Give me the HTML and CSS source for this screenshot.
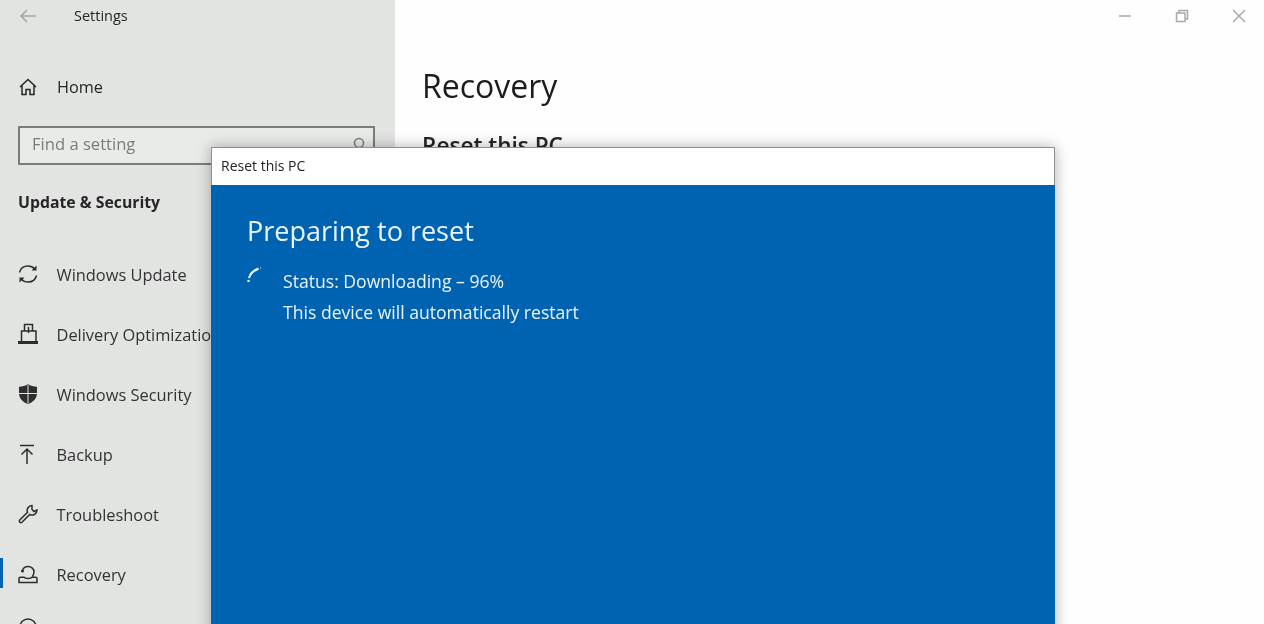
FILE: index.html
```html
<!DOCTYPE html>
<html lang="en">
<head>
    <meta charset="UTF-8">
    <title>Settings</title>
    <link rel="stylesheet" href="styles.css">
</head>
<body>
    <div class="window">
        <div class="sidebar">
            <div class="titlebar">
                <svg class="back" width="18" height="14" viewBox="0 0 18 14"><path d="M8 1 2 7l6 6M2 7h15"/></svg>
                <span>Settings</span>
            </div>
            <div class="home-row">
                <svg class="icon" width="20" height="20" viewBox="0 0 20 20"><path d="M2 10 10 2.500 18 10M4 8.500V17.500H8V12.500H12V17.500H16V8.500"/></svg>
                <span>Home</span>
            </div>
            <div class="search">
                <span>Find a setting</span>
                <svg width="14" height="14" viewBox="0 0 14 14"><circle cx="7" cy="6" r="4.500"/></svg>
            </div>
            <h3 class="section">Update &amp; Security</h3>
            <ul class="nav">
                <li>
                    <svg class="icon" width="22" height="22" viewBox="0 0 22 22"><path d="M2.500 9.500C3.500 5.500 7 3 11 3c2.800 0 5 1 6.800 3M19.500 12.500C18.500 16.500 15 19 11 19c-2.800 0-5-1-6.800-3"/><path class="solid" d="M19.500 2.500v5h-5zM2.500 19.500v-5h5z"/></svg>
                    <span>Windows Update</span>
                </li>
                <li>
                    <svg class="icon" width="22" height="22" viewBox="0 0 22 22"><path d="M4.500 18V8H19V18M7.500 8V1.500H15.500V8M11.500 10V4"/><path class="solid" d="M1 18H21V21H1Z"/></svg>
                    <span>Delivery Optimization</span>
                </li>
                <li>
                    <svg class="icon" width="22" height="22" viewBox="0 0 22 22"><path class="solid" d="M11 1c2.500 1.800 5.500 2.700 9 2.800V10c0 5.500-3.500 9-9 11C5.500 19 2 15.500 2 10V3.800C5.500 3.700 8.500 2.800 11 1Z"/><path class="gap" d="M11 1.500v19M2 10.500h18"/></svg>
                    <span>Windows Security</span>
                </li>
                <li>
                    <svg class="icon" width="22" height="22" viewBox="0 0 22 22"><path d="M3 2.500H17M10 21V6M4.500 11.500 10 6l5.500 5.500"/></svg>
                    <span>Backup</span>
                </li>
                <li>
                    <svg class="icon" width="22" height="22" viewBox="0 0 22 22"><path d="M15 2.500a5 5 0 0 0-4.500 6.800L2.800 17a1.700 1.700 0 0 0 0 2.200 1.700 1.700 0 0 0 2.200 0l7.700-7.700A5 5 0 0 0 20 7l-3 1.500-2-2Z"/></svg>
                    <span>Troubleshoot</span>
                </li>
                <li class="active">
                    <svg class="icon" width="22" height="22" viewBox="0 0 22 22"><path d="M5.500 7a6 6 0 0 1 5.500-3.500c3.500 0 6 2.500 6 5.500 0 1.500-.5 3-1.500 4.500M2 19.500V15.500c0-.8.500-1.300 1.300-1.300H7c1 1.800 7 1.800 8 0h3.700c.8 0 1.300.5 1.300 1.300v4Z"/><circle class="solid" cx="5.500" cy="8" r="1.500"/></svg>
                    <span>Recovery</span>
                </li>
                <li>
                    <svg class="icon peek" width="22" height="22" viewBox="0 0 22 22"><circle cx="11" cy="4" r="8"/></svg>
                </li>
            </ul>
        </div>
        <div class="main">
            <div class="window-buttons">
                <svg width="14" height="14" viewBox="0 0 14 14"><path d="M1 7H13"/></svg>
                <svg width="14" height="14" viewBox="0 0 14 14"><path d="M1.500 4H10V12.500H1.500ZM4 4V1.500H12.500V10H10"/></svg>
                <svg width="14" height="14" viewBox="0 0 14 14"><path d="M1 1 13 13M13 1 1 13"/></svg>
            </div>
            <h1>Recovery</h1>
            <h2>Reset this PC</h2>
        </div>
        <div class="dialog">
            <div class="dialog-title">Reset this PC</div>
            <div class="dialog-body">
                <h2>Preparing to reset</h2>
                <div class="status">
                    <svg class="spinner" width="18" height="20" viewBox="0 0 18 20"><path d="M1.500 15C1.500 8 6 2.500 14 1"/></svg>
                    <div>
                        <p>Status: Downloading – 96%</p>
                        <p>This device will automatically restart</p>
                    </div>
                </div>
            </div>
        </div>
    </div>
</body>
</html>
```

FILE: styles.css
```css
* {
    box-sizing: border-box;
}

html, body {
    height: 100%;
    margin: 0;
    overflow: hidden;
}

body {
    font-family: 'Open Sans', 'Noto Sans', sans-serif;
    color: #262626;
}

.window {
    display: flex;
    height: 624px;
    position: relative;
    overflow: hidden;
    background: #fdfefd;
    filter: blur(0.5px);
}

svg {
    fill: none;
    stroke: currentColor;
    stroke-width: 1.5;
    flex: none;
}

.solid {
    fill: currentColor;
    stroke: none;
}

.gap {
    stroke: #e2e4e2;
    stroke-width: 1;
}

/* sidebar */
.sidebar {
    width: 395px;
    flex: none;
    background: #e2e4e2;
    padding: 0 20px 0 18px;
}

.titlebar {
    display: flex;
    align-items: center;
    height: 31px;
    font-size: 14.5px;
}

.back {
    color: #a4a6a4;
    margin: 0 37px 0 1px;
}

.home-row {
    display: flex;
    align-items: center;
    gap: 19px;
    margin-top: 44px;
    height: 24px;
    font-size: 16.3px;
}

.search {
    display: flex;
    align-items: center;
    justify-content: space-between;
    height: 39px;
    margin-top: 27px;
    padding: 0 7px 4px 12px;
    border: 2px solid #7b7d7b;
    background: #e9ebe9;
    font-size: 16.6px;
    color: #7a7c7a;
}

.section {
    margin: 25px 0 0;
    font-size: 15.8px;
    font-weight: 700;
    line-height: 24px;
}

.nav {
    list-style: none;
    margin: 30px 0 0 -1px;
    padding: 0;
}

.nav li {
    display: flex;
    align-items: center;
    gap: 17.5px;
    height: 60px;
    font-size: 16.4px;
    white-space: nowrap;
    color: #333;
    position: relative;
}

.nav li svg {
    color: #2d2d2d;
}

.nav li svg.peek {
    overflow: visible;
}

.nav li.active::before {
    content: "";
    position: absolute;
    left: -17px;
    top: 14px;
    width: 3px;
    height: 30px;
    background: #0063b1;
}

/* main pane */
.main {
    flex: 1;
    padding: 0 0 0 27px;
    position: relative;
}

.window-buttons {
    display: flex;
    justify-content: flex-end;
    gap: 43px;
    height: 32px;
    align-items: center;
    padding-right: 18px;
    color: #a9a9a9;
}

.main h1 {
    margin: 34px 0 0;
    font-size: 32px;
    font-weight: 400;
    line-height: 40px;
    color: #1c1c1c;
}

.main h2 {
    margin: 26px 0 0;
    font-size: 22.6px;
    font-weight: 600;
    line-height: 28px;
}

/* reset dialog */
.dialog {
    position: absolute;
    left: 211px;
    top: 147px;
    width: 844px;
    height: 500px;
    box-shadow: 0 0 14px rgba(0, 0, 0, 0.3);
    background: #0063b1;
}

.dialog-title {
    height: 38px;
    background: #fff;
    border: 1px solid #8d8f8d;
    border-bottom: 0;
    padding-left: 9px;
    font-size: 14px;
    line-height: 35px;
    color: #222;
}

.dialog-body {
    padding: 27px 36px;
    color: #eaf4fb;
}

.dialog-body h2 {
    margin: 0;
    font-size: 27px;
    font-weight: 400;
    line-height: 38px;
}

.status {
    display: flex;
    gap: 18px;
    margin-top: 20px;
}

.spinner {
    stroke-width: 2.2;
    stroke-dasharray: 2 2 14 2;
    margin-top: -3px;
}

.status p {
    margin: 0 0 9px;
    font-size: 17.6px;
    line-height: 22px;
}
```
